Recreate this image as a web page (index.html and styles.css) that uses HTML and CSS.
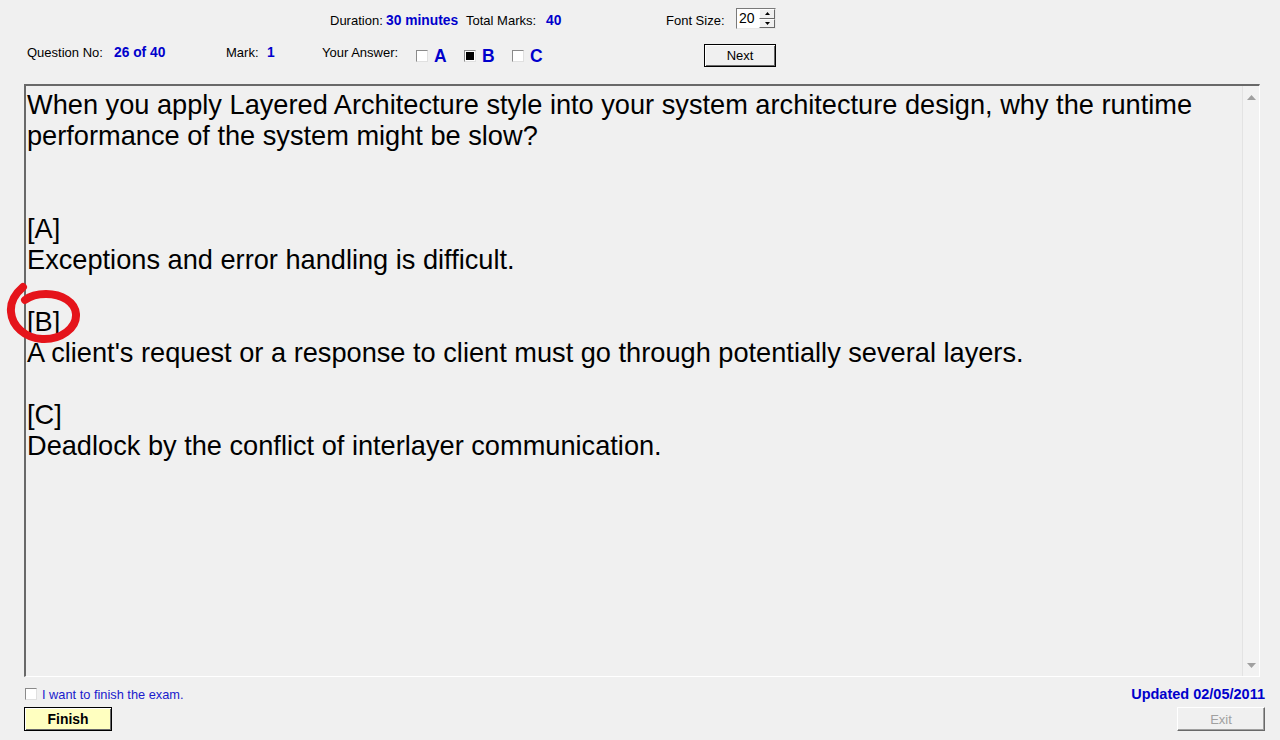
FILE: index.html
```html
<!DOCTYPE html>
<html>
<head>
<meta charset="utf-8">
<link rel="stylesheet" href="styles.css">
</head>
<body>
<div class="app">
  <div class="header">
    <div class="row row1">
      <span class="lbl dur-lbl">Duration:</span>
      <span class="val dur-val">30 minutes</span>
      <span class="lbl tm-lbl">Total Marks:</span>
      <span class="val tm-val">40</span>
      <span class="lbl fs-lbl">Font Size:</span>
      <div class="spinner">
        <span class="spin-num">20</span>
        <div class="spin-btns">
          <div class="spin-btn"><svg width="5" height="3" viewBox="0 0 5 3"><path d="M2.5 0 L5 3 L0 3Z" fill="#000"/></svg></div>
          <div class="spin-btn"><svg width="5" height="3" viewBox="0 0 5 3"><path d="M0 0 L5 0 L2.5 3Z" fill="#000"/></svg></div>
        </div>
      </div>
    </div>
    <div class="row row2">
      <span class="lbl up q-lbl">Question No:</span>
      <span class="val up q-val">26 of 40</span>
      <span class="lbl up m-lbl">Mark:</span>
      <span class="val up m-val">1</span>
      <span class="lbl up ya-lbl">Your Answer:</span>
      <div class="answers">
        <span class="cb"></span><span class="opt">A</span>
        <span class="cb checked"></span><span class="opt">B</span>
        <span class="cb"></span><span class="opt opt-last">C</span>
      </div>
      <button class="btn next-btn">Next</button>
    </div>
  </div>
  <div class="textbox">
    <div class="content">
      <p>When you apply Layered Architecture style into your system architecture design, why the runtime performance of the system might be slow?</p>
      <p class="blank">&nbsp;</p>
      <p class="blank">&nbsp;</p>
      <p>[A]</p>
      <p>Exceptions and error handling is difficult.</p>
      <p class="blank">&nbsp;</p>
      <p>[B]</p>
      <p>A client's request or a response to client must go through potentially several layers.</p>
      <p class="blank">&nbsp;</p>
      <p>[C]</p>
      <p>Deadlock by the conflict of interlayer communication.</p>
    </div>
    <div class="scrollbar">
      <svg class="arrow" width="9" height="5" viewBox="0 0 9 5"><path d="M4.5 0 L9 5 L0 5Z" fill="#a0a0a0"/></svg>
      <svg class="arrow" width="9" height="5" viewBox="0 0 9 5"><path d="M0 0 L9 0 L4.5 5Z" fill="#a0a0a0"/></svg>
    </div>
  </div>
  <div class="footer">
    <div class="frow">
      <label class="finish-check"><span class="cb sm"></span><span class="fc-text">I want to finish the exam.</span></label>
      <span class="updated">Updated 02/05/2011</span>
    </div>
    <div class="frow">
      <button class="btn finish-btn">Finish</button>
      <button class="btn exit-btn">Exit</button>
    </div>
  </div>
  <svg class="circle" width="90" height="70" viewBox="0 0 90 70">
    <path d="M23 5 C16 11 10 19 11 30 C12 44 25 56 42 57 C61 58 77 46 76 32 C75 20 62 12 46 12 C37 12 30 14 25 18" fill="none" stroke="#e5141b" stroke-width="8" stroke-linecap="round" stroke-linejoin="round"/>
  </svg>
</div>
</body>
</html>
```
FILE: styles.css
```css
* { box-sizing: border-box; }
html, body { margin: 0; padding: 0; }
body {
  background: #f0f0f0;
  font-family: "Liberation Sans", Arial, sans-serif;
  width: 1280px;
  height: 740px;
  overflow: hidden;
}
.app {
  position: relative;
  width: 1280px;
  height: 740px;
}
.header {
  height: 84px;
  padding-top: 8px;
}
.row {
  display: flex;
  align-items: center;
}
.row1 {
  height: 24px;
  padding-left: 330px;
}
.row2 {
  height: 23px;
  margin-top: 12px;
  padding-left: 27px;
}
.lbl {
  font-size: 13px;
  color: #000;
  white-space: nowrap;
}
.val {
  font-size: 13.8px;
  font-weight: bold;
  color: #0000cc;
  white-space: nowrap;
}
.up { margin-bottom: 6px; }
.dur-lbl { width: 56px; }
.dur-val { width: 80px; }
.tm-lbl { width: 80px; }
.tm-val { width: 120px; }
.fs-lbl { width: 70px; }
.spinner {
  width: 40px;
  height: 21px;
  margin-top: -3px;
  background: #fff;
  border: 1px solid;
  border-color: #7a7a7a #e8e8e8 #e8e8e8 #7a7a7a;
  display: flex;
  align-items: stretch;
}
.spin-num {
  font-size: 14px;
  flex: 1;
  padding-left: 2px;
  line-height: 18px;
}
.spin-btns {
  width: 16px;
  display: flex;
  flex-direction: column;
  background: #f0f0f0;
}
.spin-btn {
  flex: 1;
  display: flex;
  align-items: center;
  justify-content: center;
  border: 1px solid;
  border-color: #fff #696969 #696969 #fff;
}
.q-lbl { width: 87px; }
.q-val { width: 112px; }
.m-lbl { width: 41px; }
.m-val { width: 55px; }
.ya-lbl { width: 94px; }
.answers {
  display: flex;
  align-items: center;
  margin-top: 1px;
}
.cb {
  width: 12px;
  height: 12px;
  background: #fff;
  border: 1px solid;
  border-color: #8a8a8a #e0e0e0 #e0e0e0 #8a8a8a;
  display: inline-block;
  flex: none;
}
.cb.checked {
  background: #000;
  box-shadow: inset 0 0 0 1px #fff;
  background-clip: content-box;
  padding: 1px;
}
.opt {
  font-size: 17.5px;
  font-weight: bold;
  color: #0000cc;
  margin-left: 6px;
  width: 30px;
}
.btn {
  font-family: "Liberation Sans", Arial, sans-serif;
  font-size: 13px;
  padding: 0;
  background: #f0f0f0;
  border: 1px solid #000;
  box-shadow: inset 1px 1px 0 #fff, inset -1px -1px 0 #696969;
  color: #000;
}
.next-btn {
  margin-left: 144px;
  width: 72px;
  height: 23px;
}
.textbox {
  margin-left: 24px;
  width: 1236px;
  height: 593px;
  border-top: 2px solid #696969;
  border-left: 2px solid #696969;
  border-right: 1px solid #fff;
  border-bottom: 1px solid #fff;
  display: flex;
  background: #f0f0f0;
}
.content {
  flex: 1;
  padding: 3px 0 0 1px;
  font-size: 27.2px;
  line-height: 31px;
  color: #000;
}
.content p {
  margin: 0;
}
.scrollbar {
  width: 17px;
  background: #f2f2f2;
  border-left: 1px solid #e3e3e3;
  display: flex;
  flex-direction: column;
  justify-content: space-between;
  align-items: center;
  padding: 9px 0 8px 1px;
}
.footer {
  padding-top: 9px;
}
.frow {
  display: flex;
  align-items: center;
  justify-content: space-between;
  padding: 0 15px 0 24px;
}
.finish-check {
  display: flex;
  align-items: center;
  margin-left: 1px;
}
.fc-text {
  font-size: 12.8px;
  color: #1a1acc;
  margin-left: 5px;
}
.updated {
  font-size: 14.5px;
  font-weight: bold;
  color: #0000cc;
}
.frow + .frow {
  margin-top: 5px;
}
.finish-btn {
  width: 88px;
  height: 24px;
  background: #ffffc0;
  font-weight: bold;
  font-size: 13.9px;
}
.exit-btn {
  width: 88px;
  height: 24px;
  color: #a0a0a0;
  border: 1px solid;
  border-color: #fff #696969 #696969 #fff;
  box-shadow: inset -1px -1px 0 #a0a0a0;
}
.circle {
  position: absolute;
  left: 0;
  top: 282px;
}
```
